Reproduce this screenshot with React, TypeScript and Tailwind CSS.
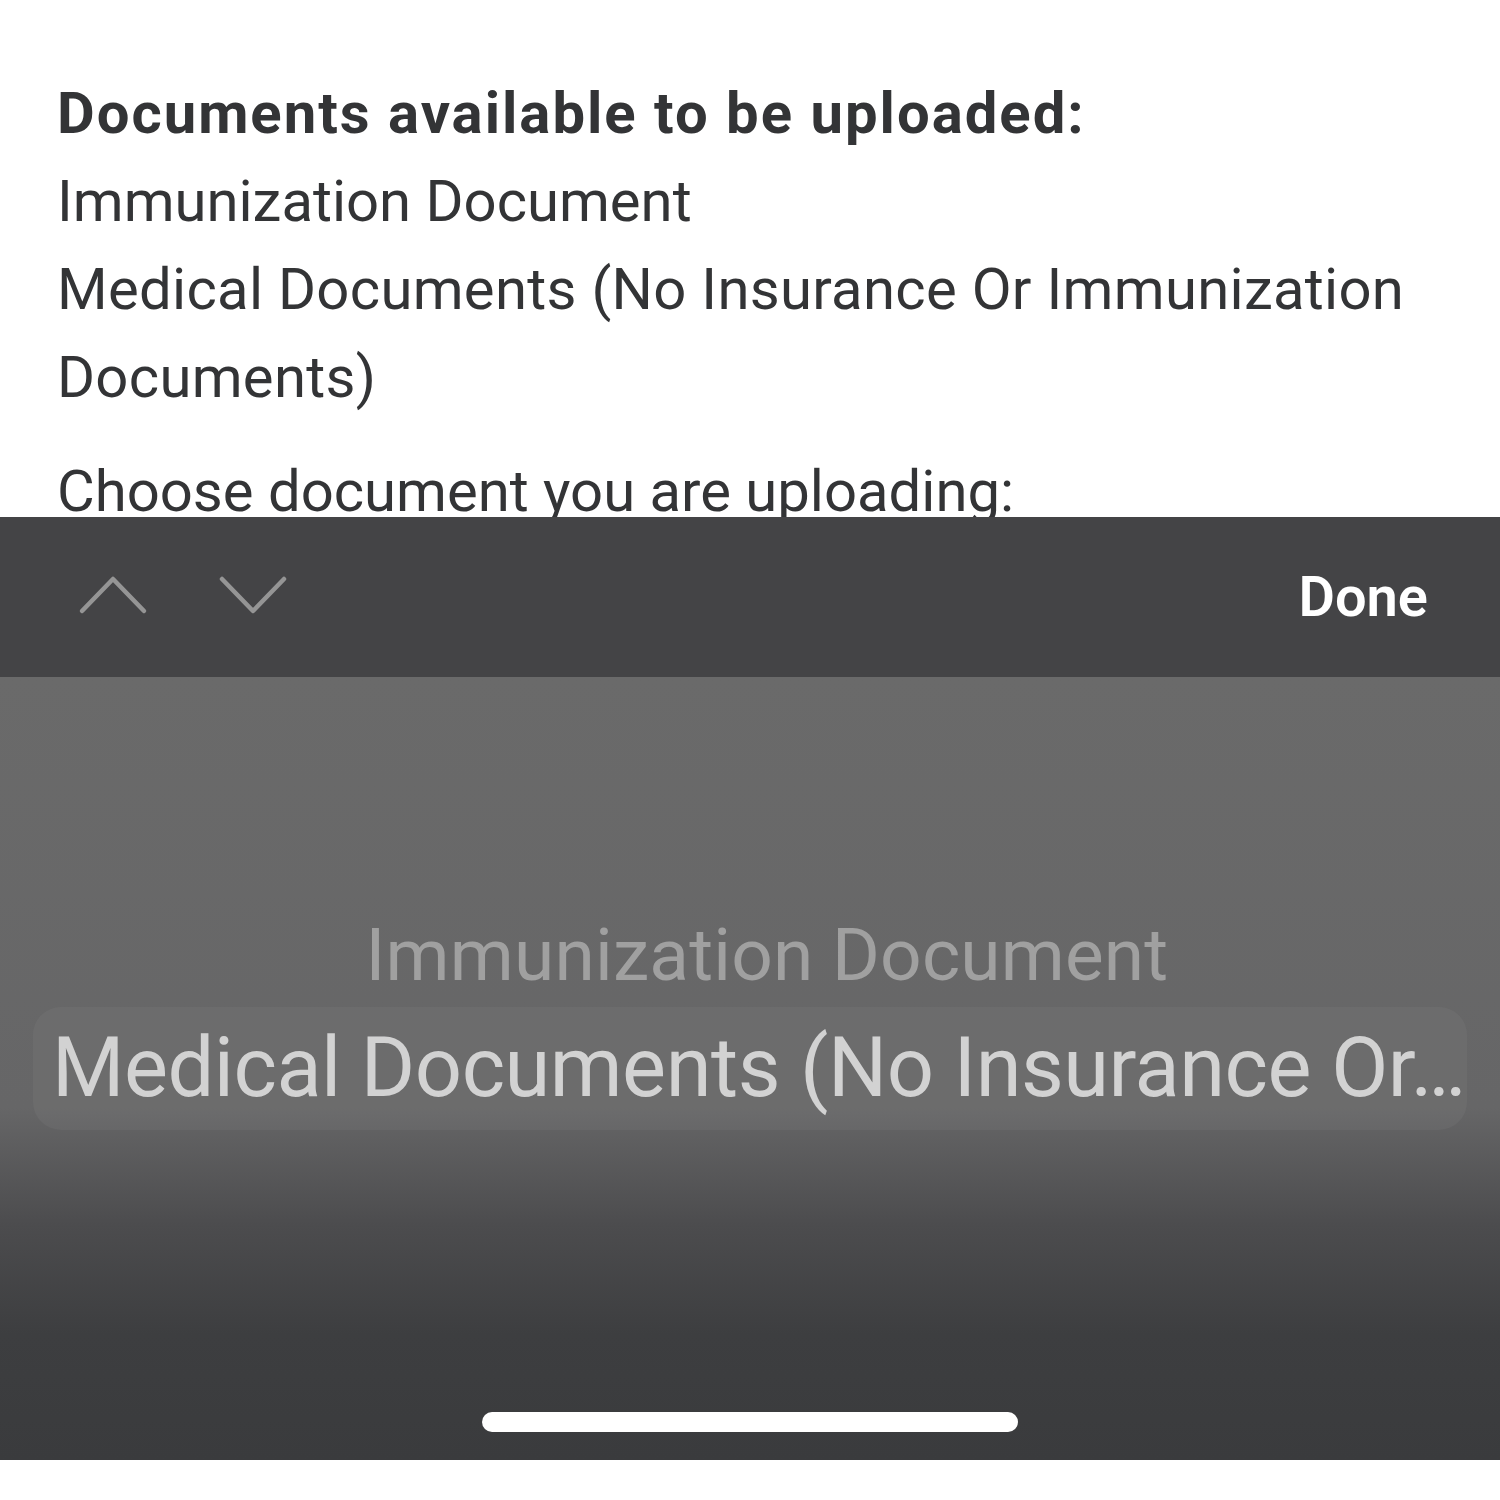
import React from 'react';

function ChevronUp() {
  return (
    <svg width="70" height="44" viewBox="0 0 70 44" fill="none">
      <path d="M4 38 L35 6 L66 38" stroke="#959595" strokeWidth="4.5" strokeLinecap="round" strokeLinejoin="round" />
    </svg>
  );
}

function ChevronDown() {
  return (
    <svg width="70" height="44" viewBox="0 0 70 44" fill="none">
      <path d="M4 6 L35 38 L66 6" stroke="#959595" strokeWidth="4.5" strokeLinecap="round" strokeLinejoin="round" />
    </svg>
  );
}

export default function App() {
  return (
    <div className="w-[1500px] h-[1500px] bg-white flex flex-col overflow-hidden font-['Roboto','Liberation_Sans',sans-serif]">
      <div className="h-[517px] overflow-hidden px-[57px] pt-[69px] text-[#333436] text-[58px] leading-[88px]">
        <p className="font-bold tracking-[2px]">Documents available to be uploaded:</p>
        <p>Immunization Document</p>
        <p className="tracking-[0.3px]">Medical Documents (No Insurance Or Immunization Documents)</p>
        <p className="mt-[26px]">Choose document you are uploading:</p>
      </div>

      <div className="h-[160px] bg-[#444446] flex items-center justify-between pl-[78px] pr-[72px]">
        <div className="flex items-center gap-[70px] mt-[-4px]">
          <ChevronUp />
          <ChevronDown />
        </div>
        <span className="text-white font-semibold text-[56px]">Done</span>
      </div>

      <div className="h-[783px] bg-[linear-gradient(to_bottom,#6a6a6a_0%,#666667_55%,#4c4c4e_70%,#3d3e40_84%,#3a3b3d_100%)] flex flex-col">
        <div className="h-[228px]" />
        <div className="h-[102px] flex items-center justify-center pl-[34px] text-[#a0a0a0] text-[73px] tracking-[0.2px]">
          Immunization Document
        </div>
        <div className="mx-[33px] h-[123px] rounded-[28px] bg-[#ffffff0a] flex items-center px-[19px] text-[#d2d2d2] text-[83px] tracking-[-0.5px] whitespace-nowrap">
          Medical Documents (No Insurance Or…
        </div>
        <div className="flex-1" />
        <div className="flex justify-center pb-[28px]">
          <div className="w-[536px] h-[20px] rounded-full bg-white" />
        </div>
      </div>

      <div className="flex-1 bg-white" />
    </div>
  );
}
